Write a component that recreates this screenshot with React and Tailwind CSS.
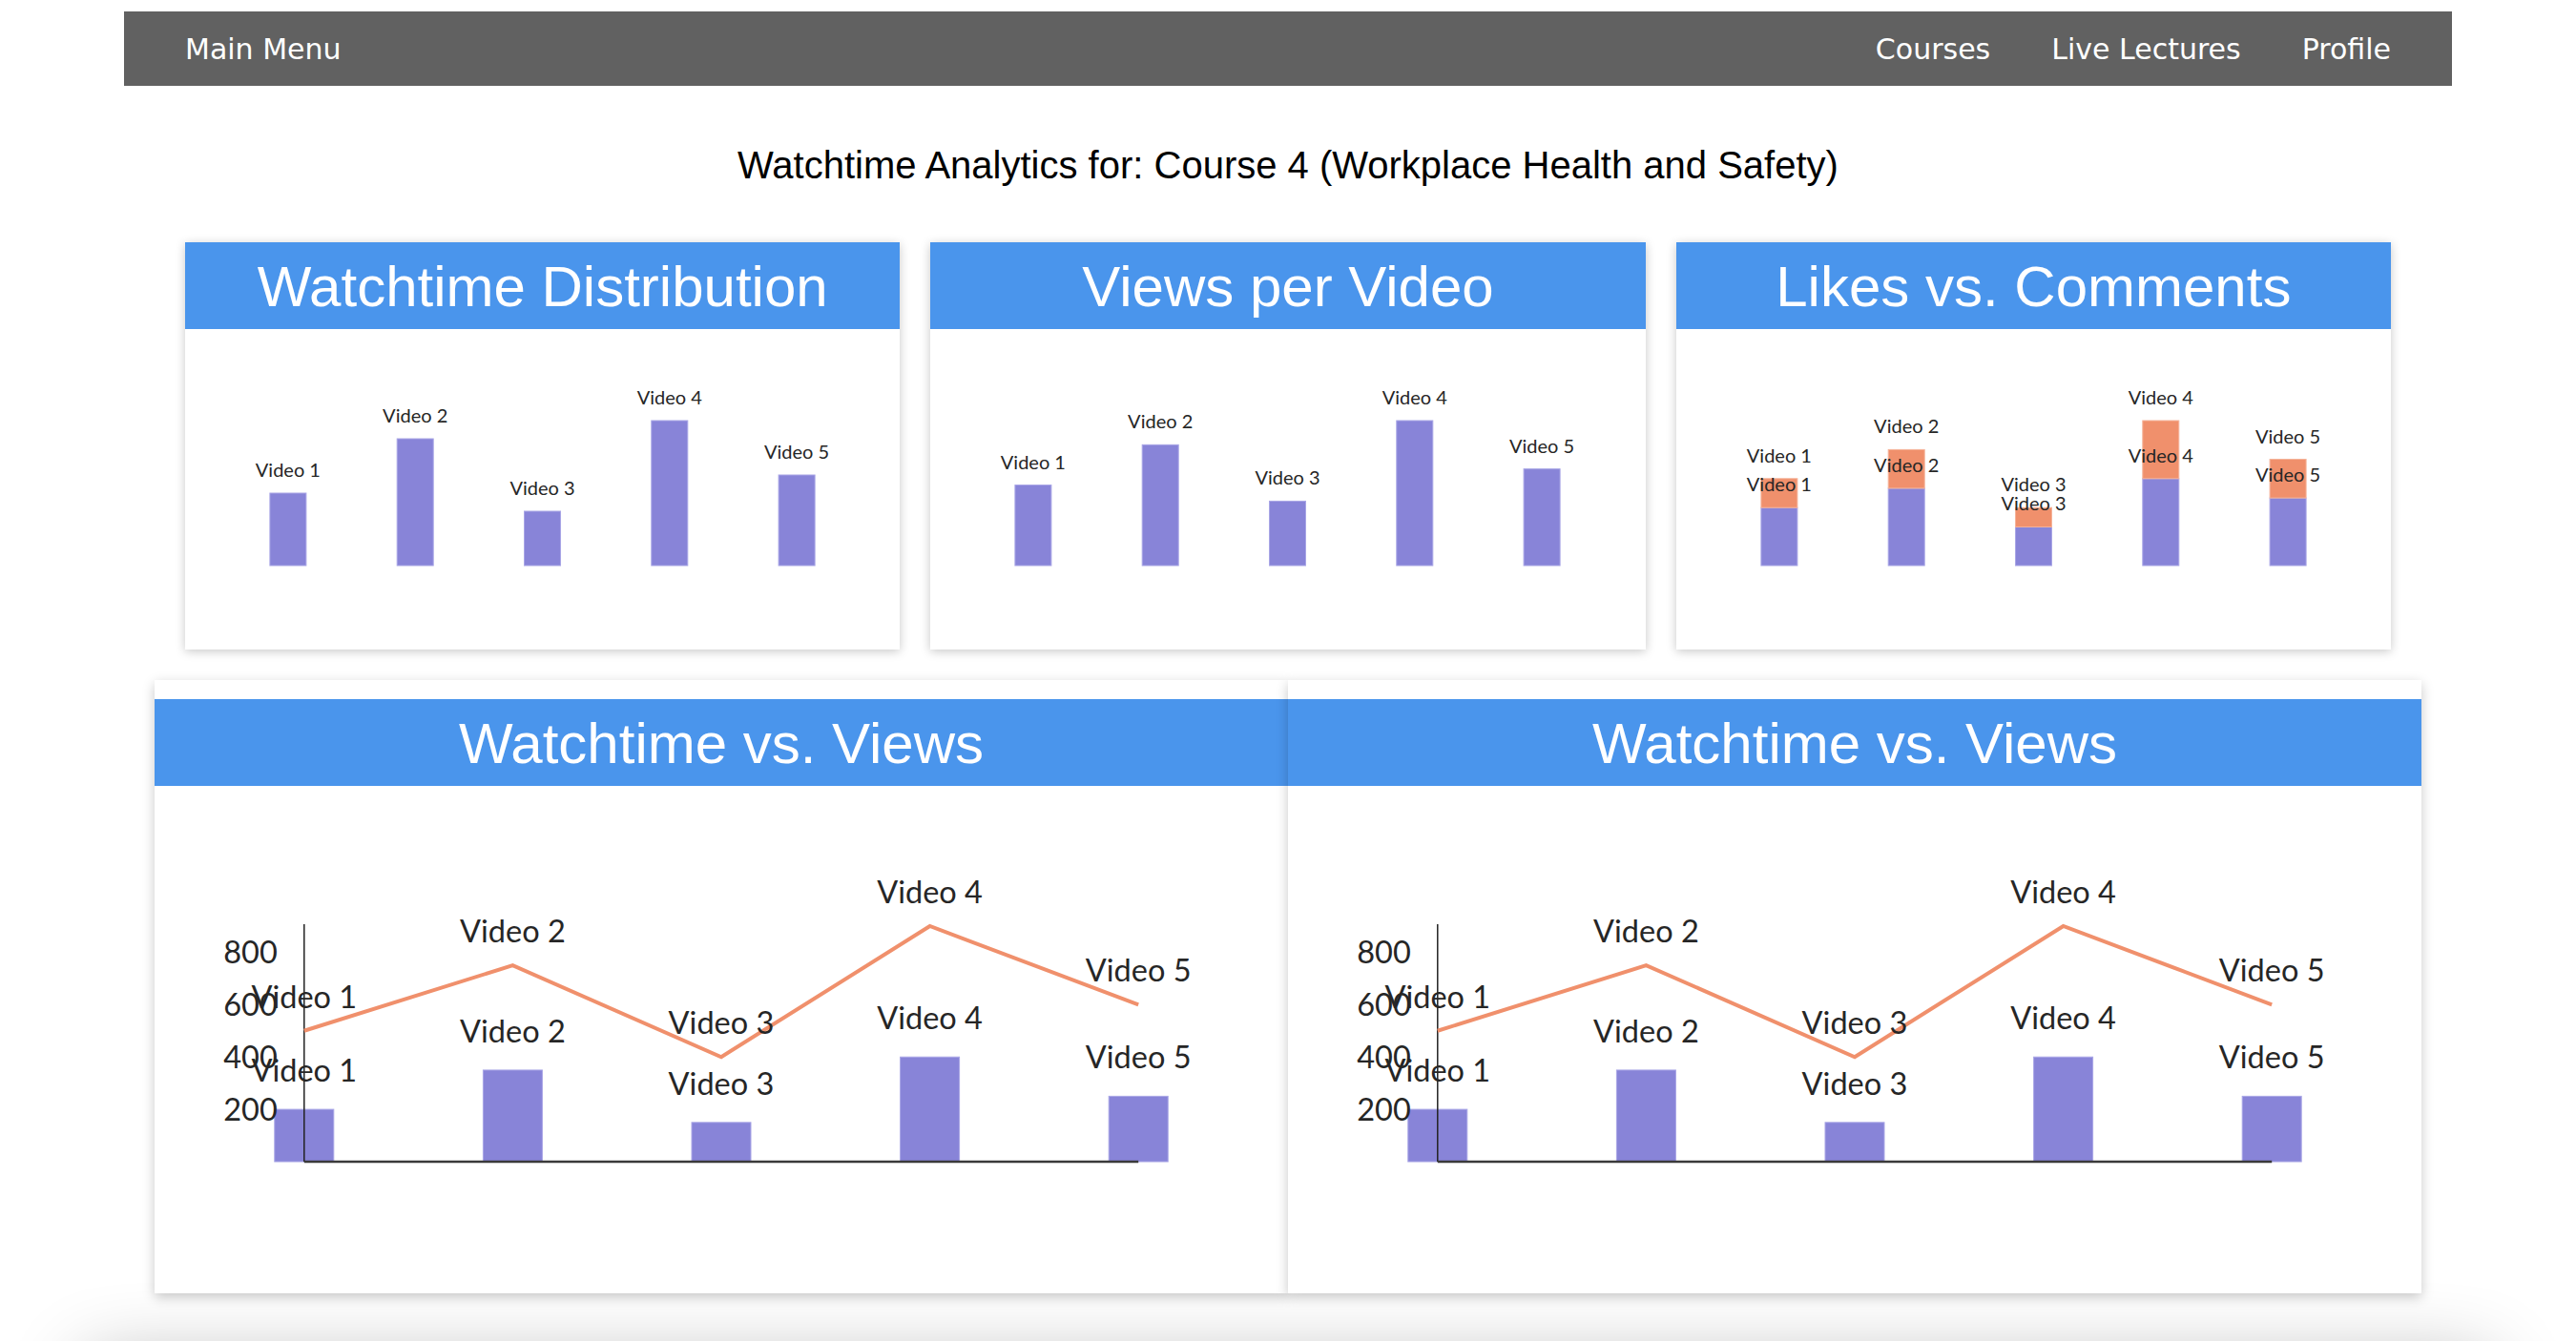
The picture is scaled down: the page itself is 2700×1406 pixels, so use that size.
import React from 'react'

const videos = ['Video 1', 'Video 2', 'Video 3', 'Video 4', 'Video 5']
const watchtime = [200, 350, 150, 400, 250]
const views = [500, 750, 400, 900, 600]
const likes = [30, 40, 20, 45, 35]
const comments = [15, 20, 10, 30, 20]

const PURPLE = '#8884d8'
const ORANGE = '#f0906c'
const LABEL_FONT = 'Lato, "Liberation Sans", sans-serif'

function SmallChart({ series }) {
  const w = 749
  const h = 336
  const base = 248
  const step = 133.3
  const bw = 38
  const totals = videos.map((_, i) => series.reduce((s, se) => s + se.values[i], 0))
  const scale = 152 / Math.max(...totals)

  // stack the series bottom to top
  const bars = videos.map((_, i) => {
    const cx = w / 2 + (i - 2) * step
    let y = base
    return series.map((se) => {
      const hh = se.values[i] * scale
      y -= hh
      return { cx, y, hh, color: se.color, stroke: se.stroke }
    })
  })

  return (
    <svg width={w} height={h} className="block mx-auto">
      {bars.map((stack, i) =>
        stack.map((b, k) => (
          <rect key={`${i}-${k}`} x={b.cx - bw / 2} y={b.y} width={bw} height={b.hh} fill={b.color} stroke={b.stroke} strokeWidth="1" />
        ))
      )}
      {bars.map((stack, i) =>
        stack.map((b, k) => (
          <text key={`l${i}-${k}`} x={b.cx} y={b.y - 17} textAnchor="middle" fontSize="20" fill="#262626" style={{ fontFamily: LABEL_FONT }}>
            {videos[i]}
          </text>
        ))
      )}
    </svg>
  )
}

function ComboChart() {
  const w = 1188
  const h = 532
  const base = 394
  const step = 218.6
  const bw = 62
  const scale = 247 / 900
  const xs = videos.map((_, i) => w / 2 + (i - 2) * step)
  const pts = xs.map((x, i) => [x, base - views[i] * scale])

  return (
    <svg width={w} height={h} className="block mx-auto">
      {xs.map((x, i) => (
        <rect key={i} x={x - bw / 2} y={base - watchtime[i] * scale} width={bw} height={watchtime[i] * scale} fill={PURPLE} stroke="#a9a6e6" strokeWidth="1" />
      ))}
      <line x1={xs[0]} y1={145} x2={xs[0]} y2={base} stroke="#222" strokeWidth="1.5" />
      <line x1={xs[0]} y1={base} x2={xs[4]} y2={base} stroke="#3a3a3a" strokeWidth="2.5" />
      {[200, 400, 600, 800].map((v) => (
        <text key={v} x={xs[0] - 28} y={base - v * scale + 12} textAnchor="end" fontSize="32.5" fill="#262626" style={{ fontFamily: LABEL_FONT }}>
          {v}
        </text>
      ))}
      <polyline points={pts.map((p) => p.join(',')).join(' ')} fill="none" stroke={ORANGE} strokeWidth="4" />
      {xs.map((x, i) => (
        <text key={`b${i}`} x={x} y={base - watchtime[i] * scale - 29} textAnchor="middle" fontSize="32.5" fill="#262626" style={{ fontFamily: LABEL_FONT }}>
          {videos[i]}
        </text>
      ))}
      {pts.map((p, i) => (
        <text key={`p${i}`} x={p[0]} y={p[1] - 24} textAnchor="middle" fontSize="32.5" fill="#262626" style={{ fontFamily: LABEL_FONT }}>
          {videos[i]}
        </text>
      ))}
    </svg>
  )
}

function CardHeader({ title }) {
  return (
    <div className="h-[91px] bg-[#4a95ec] flex items-center justify-center pt-[2px]">
      <span className="text-white text-[60px] leading-none font-['Liberation_Sans',Arial,sans-serif]">{title}</span>
    </div>
  )
}

export default function App() {
  return (
    <div className="min-h-screen bg-white pt-[12px] overflow-hidden">
      {/* Nav */}
      <nav className="w-[2440px] mx-auto h-[78px] bg-[#616161] flex items-center justify-between px-[32px] font-['DejaVu_Sans',sans-serif] text-[30px] text-white">
        <a className="px-[32px]">Main Menu</a>
        <div className="flex">
          <a className="px-[32px]">Courses</a>
          <a className="px-[32px]">Live Lectures</a>
          <a className="px-[32px]">Profile</a>
        </div>
      </nav>

      <h1 className="mt-[60px] text-center text-[40px] leading-[46px] text-black font-['Liberation_Sans',Arial,sans-serif]">
        Watchtime Analytics for: Course 4 (Workplace Health and Safety)
      </h1>

      {/* Top charts */}
      <div className="w-[2312px] mx-auto mt-[58px] grid grid-cols-3 gap-[32px]">
        <div className="bg-white shadow-[0_2px_10px_rgba(0,0,0,0.22)]">
          <CardHeader title="Watchtime Distribution" />
          <SmallChart series={[{ values: watchtime, color: PURPLE, stroke: '#a9a6e6' }]} />
        </div>
        <div className="bg-white shadow-[0_2px_10px_rgba(0,0,0,0.22)]">
          <CardHeader title="Views per Video" />
          <SmallChart series={[{ values: views, color: PURPLE, stroke: '#a9a6e6' }]} />
        </div>
        <div className="bg-white shadow-[0_2px_10px_rgba(0,0,0,0.22)]">
          <CardHeader title="Likes vs. Comments" />
          <SmallChart
            series={[
              { values: likes, color: PURPLE, stroke: '#a9a6e6' },
              { values: comments, color: ORANGE, stroke: '#f5b39a' },
            ]}
          />
        </div>
      </div>

      {/* Bottom charts */}
      <div className="w-[2376px] mx-auto mt-[32px] grid grid-cols-2">
        <div className="relative bg-white pt-[20px] shadow-[0_4px_12px_rgba(0,0,0,0.22)]">
          <CardHeader title="Watchtime vs. Views" />
          <ComboChart />
        </div>
        <div className="relative bg-white pt-[20px] shadow-[0_4px_12px_rgba(0,0,0,0.22)]">
          <CardHeader title="Watchtime vs. Views" />
          <ComboChart />
        </div>
      </div>

      <div className="w-[2520px] mx-auto mt-[72px] h-[200px] bg-white shadow-[0_0_80px_rgba(0,0,0,0.3)]" />
    </div>
  )
}
